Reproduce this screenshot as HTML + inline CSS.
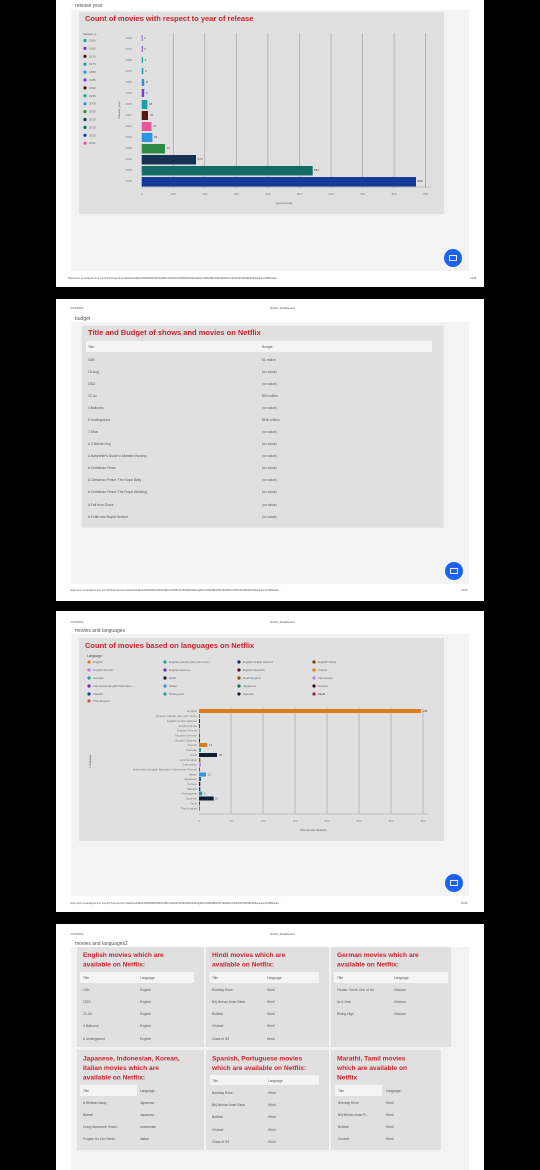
<!DOCTYPE html>
<html><head><meta charset="utf-8"><style>
html,body{margin:0;padding:0;background:#000;}
svg{display:block;font-family:"Liberation Sans",sans-serif;}
</style></head><body>
<svg width="540" height="1170" viewBox="0 0 540 1170" xmlns="http://www.w3.org/2000/svg">
<rect width="540" height="1170" fill="#000"/>

<!-- PAGE 1 -->
<rect x="56" y="0" width="428" height="287" fill="#fff"/>
<rect x="71" y="10" width="398" height="261" fill="#f3f3f3"/>
<text x="75" y="7" font-size="5" fill="#555">release year</text>
<rect x="79" y="12" width="365" height="202" fill="#e0e0e0"/>
<text x="85" y="21" font-size="7.5" font-weight="bold" fill="#d0202a">Count of movies with respect to year of release</text>
<g font-size="3" fill="#555">
<text x="83" y="35">release_y...</text>
</g>
<g id="leg1" font-size="3" fill="#666">
<circle cx="85" cy="40.5" r="1.6" fill="#1aa39a"/><text x="89" y="41.5">1960</text>
<circle cx="85" cy="48.4" r="1.6" fill="#7a3fc8"/><text x="89" y="49.4">1965</text>
<circle cx="85" cy="56.3" r="1.6" fill="#4a1010"/><text x="89" y="57.3">1970</text>
<circle cx="85" cy="64.2" r="1.6" fill="#1aa39a"/><text x="89" y="65.2">1975</text>
<circle cx="85" cy="72.1" r="1.6" fill="#2b95e0"/><text x="89" y="73.1">1980</text>
<circle cx="85" cy="80" r="1.6" fill="#7a3fc8"/><text x="89" y="81">1985</text>
<circle cx="85" cy="87.9" r="1.6" fill="#4a1010"/><text x="89" y="88.9">1990</text>
<circle cx="85" cy="95.8" r="1.6" fill="#1aa39a"/><text x="89" y="96.8">1995</text>
<circle cx="85" cy="103.7" r="1.6" fill="#2b95e0"/><text x="89" y="104.7">2000</text>
<circle cx="85" cy="111.6" r="1.6" fill="#2e8b46"/><text x="89" y="112.6">2005</text>
<circle cx="85" cy="119.5" r="1.6" fill="#163250"/><text x="89" y="120.5">2010</text>
<circle cx="85" cy="127.4" r="1.6" fill="#136b66"/><text x="89" y="128.4">2015</text>
<circle cx="85" cy="135.3" r="1.6" fill="#153a9a"/><text x="89" y="136.3">2020</text>
<circle cx="85" cy="143.2" r="1.6" fill="#e8579b"/><text x="89" y="144.2">2021</text>
</g>
<text x="120" y="110" font-size="3" fill="#555" transform="rotate(-90 120 110)" text-anchor="middle">release_year</text>
<g stroke="#9a9a9a" stroke-width="0.6">
<line x1="173.2" y1="33" x2="173.2" y2="188"/><line x1="204.8" y1="33" x2="204.8" y2="188"/>
<line x1="236.3" y1="33" x2="236.3" y2="188"/><line x1="267.9" y1="33" x2="267.9" y2="188"/>
<line x1="299.4" y1="33" x2="299.4" y2="188"/><line x1="331" y1="33" x2="331" y2="188"/>
<line x1="362.5" y1="33" x2="362.5" y2="188"/><line x1="394.1" y1="33" x2="394.1" y2="188"/>
<line x1="425.7" y1="33" x2="425.7" y2="188"/>
<line x1="141.7" y1="187" x2="431" y2="187"/>
</g>
<g font-size="3" fill="#777">
<text x="132" y="39" text-anchor="end">1962</text><rect x="141.7" y="35" width="0.8" height="6" fill="#7a3fc8"/><text x="144" y="39" fill="#444">2</text>
<text x="132" y="50" text-anchor="end">1973</text><rect x="141.7" y="46" width="1" height="6" fill="#7a3fc8"/><text x="144" y="50" fill="#444">3</text>
<text x="132" y="61" text-anchor="end">1980</text><rect x="141.7" y="57" width="1.3" height="6" fill="#1aa39a"/><text x="144.5" y="61" fill="#444">4</text>
<text x="132" y="72" text-anchor="end">1975</text><rect x="141.7" y="68" width="1.6" height="6" fill="#1aa39a"/><text x="145" y="72" fill="#444">5</text>
<text x="132" y="83" text-anchor="end">1985</text><rect x="141.7" y="79" width="2.5" height="7" fill="#2b95e0"/><text x="146" y="83" fill="#444">8</text>
<text x="132" y="94" text-anchor="end">1990</text><rect x="141.7" y="89" width="2.5" height="8" fill="#7a3fc8"/><text x="146" y="94" fill="#444">8</text>
<text x="132" y="105" text-anchor="end">1995</text><rect x="141.7" y="100" width="5.7" height="9" fill="#1aa39a"/><text x="149" y="105" fill="#444">18</text>
<text x="132" y="116" text-anchor="end">1997</text><rect x="141.7" y="111" width="6.3" height="9" fill="#5a1418"/><text x="150" y="116" fill="#444">20</text>
<text x="132" y="127" text-anchor="end">2021</text><rect x="141.7" y="122" width="9.8" height="9" fill="#e8579b"/><text x="153" y="127" fill="#444">31</text>
<text x="132" y="138" text-anchor="end">2000</text><rect x="141.7" y="133" width="10.7" height="9" fill="#2b95e0"/><text x="154" y="138" fill="#444">34</text>
<text x="132" y="149" text-anchor="end">2005</text><rect x="141.7" y="144" width="23.3" height="9.5" fill="#2e8b46"/><text x="166.5" y="149" fill="#444">73</text>
<text x="132" y="160" text-anchor="end">2010</text><rect x="141.7" y="155" width="54.3" height="9.5" fill="#163250"/><text x="197.5" y="160" fill="#444">172</text>
<text x="132" y="171" text-anchor="end">2015</text><rect x="141.7" y="166" width="171" height="9.5" fill="#136b66"/><text x="314" y="171" fill="#444">541</text>
<text x="132" y="182" text-anchor="end">2020</text><rect x="141.7" y="177" width="274.3" height="9.5" fill="#153a9a"/><text x="417.5" y="182" fill="#444">869</text>
</g>
<g font-size="3" fill="#777" text-anchor="middle">
<text x="141.7" y="195">0</text><text x="173.2" y="195">100</text><text x="204.8" y="195">200</text><text x="236.3" y="195">300</text><text x="267.9" y="195">400</text><text x="299.4" y="195">500</text><text x="331" y="195">600</text><text x="362.5" y="195">700</text><text x="394.1" y="195">800</text><text x="425.7" y="195">900</text>
<text x="284" y="204" fill="#555">type (Count)</text>
</g>
<circle cx="453" cy="258" r="9" fill="#1a62f0"/>
<rect x="449.5" y="255.5" width="7" height="5" fill="none" stroke="#fff" stroke-width="0.9"/>
<text x="68" y="279" font-size="2.6" fill="#555">https://us1.ca.analytics.ibm.com/bi/?perspective=dashboard&amp;id=i09A80BAF867E4ZDCA4D0F33C800EF904&amp;objRef=i09A80BAF867E4ZDCA4D0F33C800EF904&amp;options%5Bdisabl...</text>
<text x="470" y="279" font-size="2.6" fill="#555">13/16</text>

<!-- PAGE 2 -->
<rect x="56" y="299" width="428" height="302" fill="#fff"/>
<text x="70" y="309" font-size="3" fill="#555">7/24/2021</text>
<text x="270" y="309" font-size="3" fill="#555">Netflix_Dashboard</text>
<rect x="71" y="322" width="398" height="262" fill="#f3f3f3"/>
<text x="75" y="320" font-size="5" fill="#555">budget</text>
<rect x="81.6" y="325.7" width="362" height="202" fill="#e0e0e0"/>
<text x="88" y="335" font-size="7.5" font-weight="bold" fill="#d0202a">Title and Budget of shows and movies on Netflix</text>
<rect x="86" y="341" width="346" height="11" fill="#f4f4f4"/>
<g font-size="3.3" fill="#555">
<text x="88" y="348">Title</text><text x="262" y="348">Budget</text>
<text x="88" y="361">13th</text><text x="262" y="361">$1 million</text>
<text x="88" y="373">15-Aug</text><text x="262" y="373">(no value)</text>
<text x="88" y="385">1922</text><text x="262" y="385">(no value)</text>
<text x="88" y="397">22-Jul</text><text x="262" y="397">$20 million</text>
<text x="88" y="409">4 Balloons</text><text x="262" y="409">(no value)</text>
<text x="88" y="421">6 Underground</text><text x="262" y="421">$150 million</text>
<text x="88" y="433">7 Años</text><text x="262" y="433">(no value)</text>
<text x="88" y="445">A 3 Minute Hug</text><text x="262" y="445">(no value)</text>
<text x="88" y="457">A Babysitter's Guide to Monster Hunting</text><text x="262" y="457">(no value)</text>
<text x="88" y="469">A Christmas Prince</text><text x="262" y="469">(no value)</text>
<text x="88" y="481">A Christmas Prince: The Royal Baby</text><text x="262" y="481">(no value)</text>
<text x="88" y="493">A Christmas Prince: The Royal Wedding</text><text x="262" y="493">(no value)</text>
<text x="88" y="506">A Fall from Grace</text><text x="262" y="506">(no value)</text>
<text x="88" y="518">A Futile and Stupid Gesture</text><text x="262" y="518">(no value)</text>
</g>
<circle cx="454" cy="571" r="9" fill="#1a62f0"/>
<rect x="450.5" y="568.5" width="7" height="5" fill="none" stroke="#fff" stroke-width="0.9"/>
<text x="70" y="591" font-size="2.6" fill="#555">https://us1.ca.analytics.ibm.com/bi/?perspective=dashboard&amp;id=i09A80BAF867E4ZDCA4D0F33C800EF904&amp;objRef=i09A80BAF867E4ZDCA4D0F33C800EF904&amp;options%5Bdisabl...</text>
<text x="461" y="591" font-size="2.6" fill="#555">14/16</text>

<!-- PAGE 3 -->
<rect x="56" y="611" width="428" height="301" fill="#fff"/>
<text x="70" y="623" font-size="3" fill="#555">7/24/2021</text>
<text x="270" y="623" font-size="3" fill="#555">Netflix_Dashboard</text>
<rect x="71" y="634" width="398" height="262" fill="#f3f3f3"/>
<text x="75" y="632" font-size="5" fill="#555">movies and languages</text>
<rect x="79" y="638" width="365" height="203" fill="#e0e0e0"/>
<text x="85" y="648" font-size="7.5" font-weight="bold" fill="#d0202a">Count of movies based on languages on Netflix</text>
<text x="87" y="657" font-size="3.3" fill="#444">Language</text>
<g font-size="3" fill="#666">
<circle cx="89" cy="662" r="1.6" fill="#e07b1a"/><text x="93" y="663">English</text>
<circle cx="89" cy="670" r="1.6" fill="#b87ef0"/><text x="93" y="671">English French</text>
<circle cx="89" cy="678" r="1.6" fill="#1aa39a"/><text x="93" y="679">German</text>
<circle cx="89" cy="686" r="1.6" fill="#6a2fb8"/><text x="93" y="687">Indonesian English Mandarin ...</text>
<circle cx="89" cy="694" r="1.6" fill="#153a9a"/><text x="93" y="695">Marathi</text>
<circle cx="89" cy="701" r="1.6" fill="#e84848"/><text x="93" y="702">Thai English</text>
<circle cx="165" cy="662" r="1.6" fill="#1aa39a"/><text x="169" y="663">English (naval) (qbu (10 mins.)</text>
<circle cx="165" cy="670" r="1.6" fill="#6a2fb8"/><text x="169" y="671">English German</text>
<circle cx="165" cy="678" r="1.6" fill="#0e1e36"/><text x="169" y="679">Hindi</text>
<circle cx="165" cy="686" r="1.6" fill="#2b95e0"/><text x="169" y="687">Italian</text>
<circle cx="165" cy="694" r="1.6" fill="#1aa39a"/><text x="169" y="695">Portuguese</text>
<circle cx="239" cy="662" r="1.6" fill="#163250"/><text x="243" y="663">English Arabic Hebrew</text>
<circle cx="239" cy="670" r="1.6" fill="#4a1010"/><text x="243" y="671">English Spanish</text>
<circle cx="239" cy="678" r="1.6" fill="#8a4a10"/><text x="243" y="679">Hindi English</text>
<circle cx="239" cy="686" r="1.6" fill="#136b66"/><text x="243" y="687">Japanese</text>
<circle cx="239" cy="694" r="1.6" fill="#0e1e36"/><text x="243" y="695">Spanish</text>
<circle cx="314" cy="662" r="1.6" fill="#7a3a10"/><text x="318" y="663">English Dinka</text>
<circle cx="314" cy="670" r="1.6" fill="#e07b1a"/><text x="318" y="671">French</text>
<circle cx="314" cy="678" r="1.6" fill="#b87ef0"/><text x="318" y="679">Indonesian</text>
<circle cx="314" cy="686" r="1.6" fill="#3a0a10"/><text x="318" y="687">Korean</text>
<circle cx="314" cy="694" r="1.6" fill="#a01850"/><text x="318" y="695" fill="#222">Tamil</text>
</g>
<text x="91" y="761" font-size="3" fill="#555" transform="rotate(-90 91 761)" text-anchor="middle">Language</text>
<g stroke="#9a9a9a" stroke-width="0.6">
<line x1="231" y1="708" x2="231" y2="814"/><line x1="263" y1="708" x2="263" y2="814"/>
<line x1="295" y1="708" x2="295" y2="814"/><line x1="327" y1="708" x2="327" y2="814"/>
<line x1="359" y1="708" x2="359" y2="814"/><line x1="391" y1="708" x2="391" y2="814"/>
<line x1="423" y1="708" x2="423" y2="814"/>
<line x1="199" y1="814" x2="428" y2="814"/>
</g>
<g font-size="3" fill="#777" text-anchor="end">
<text x="197" y="712">English</text><text x="197" y="717">English (naval) (qbu (10 mins.)</text><text x="197" y="722">English Arabic Hebrew</text><text x="197" y="727">English Dinka</text><text x="197" y="731.5">English French</text><text x="197" y="736.5">English German</text><text x="197" y="741.5">English Spanish</text><text x="197" y="746">French</text><text x="197" y="751">German</text><text x="197" y="756">Hindi</text><text x="197" y="761">Hindi English</text><text x="197" y="765.5">Indonesian</text><text x="197" y="770.5">Indonesian English Mandarin Cantonese French</text><text x="197" y="775.5">Italian</text><text x="197" y="780">Japanese</text><text x="197" y="785">Korean</text><text x="197" y="790">Marathi</text><text x="197" y="794.5">Portuguese</text><text x="197" y="799.5">Spanish</text><text x="197" y="804.5">Tamil</text><text x="197" y="809.5">Thai English</text>
</g>
<g>
<rect x="199" y="709" width="222" height="4" fill="#e07b1a"/>
<rect x="199" y="714" width="1" height="4" fill="#1aa39a"/>
<rect x="199" y="719" width="1" height="4" fill="#163250"/>
<rect x="199" y="724" width="1" height="4" fill="#7a3a10"/>
<rect x="199" y="728.5" width="1" height="4" fill="#b87ef0"/>
<rect x="199" y="733.5" width="1" height="4" fill="#6a2fb8"/>
<rect x="199" y="738.5" width="1" height="4" fill="#4a1010"/>
<rect x="199" y="743" width="8.3" height="4" fill="#e07b1a"/>
<rect x="199" y="748" width="2" height="4" fill="#1aa39a"/>
<rect x="199" y="753" width="18" height="4" fill="#0e1e36"/>
<rect x="199" y="758" width="1.3" height="4" fill="#8a4a10"/>
<rect x="199" y="762.5" width="2" height="4" fill="#b87ef0"/>
<rect x="199" y="767.5" width="1" height="4" fill="#6a2fb8"/>
<rect x="199" y="772.5" width="7" height="4" fill="#2b95e0"/>
<rect x="199" y="777" width="2" height="4" fill="#136b66"/>
<rect x="199" y="782" width="1.3" height="4" fill="#3a0a10"/>
<rect x="199" y="787" width="1.3" height="4" fill="#153a9a"/>
<rect x="199" y="791.5" width="3.2" height="4" fill="#1aa39a"/>
<rect x="199" y="796.5" width="14.7" height="4" fill="#0e1e36"/>
<rect x="199" y="801.5" width="1" height="4" fill="#a01850"/>
<rect x="199" y="806.5" width="1" height="4" fill="#e84848"/>
</g>
<g font-size="2.6" fill="#444">
<text x="423" y="712">346</text><text x="209" y="746">13</text><text x="219" y="756">28</text><text x="208" y="775.5">11</text><text x="215" y="799.5">23</text><text x="204" y="794.5">5</text>
</g>
<g font-size="3" fill="#777" text-anchor="middle">
<text x="199" y="822">0</text><text x="231" y="822">50</text><text x="263" y="822">100</text><text x="295" y="822">150</text><text x="327" y="822">200</text><text x="359" y="822">250</text><text x="391" y="822">300</text><text x="423" y="822">350</text>
<text x="313" y="831" fill="#555">Title (Count distinct)</text>
</g>
<circle cx="454" cy="883" r="9" fill="#1a62f0"/>
<rect x="450.5" y="880.5" width="7" height="5" fill="none" stroke="#fff" stroke-width="0.9"/>
<text x="70" y="904" font-size="2.6" fill="#555">https://us1.ca.analytics.ibm.com/bi/?perspective=dashboard&amp;id=i09A80BAF867E4ZDCA4D0F33C800EF904&amp;objRef=i09A80BAF867E4ZDCA4D0F33C800EF904&amp;options%5Bdisabl...</text>
<text x="461" y="904" font-size="2.6" fill="#555">15/16</text>

<!-- PAGE 4 -->
<rect x="56" y="924" width="428" height="246" fill="#fff"/>
<text x="70" y="935" font-size="3" fill="#555">7/24/2021</text>
<text x="270" y="935" font-size="3" fill="#555">Netflix_Dashboard</text>
<rect x="71" y="947" width="398" height="223" fill="#f3f3f3"/>
<text x="75" y="945" font-size="5" fill="#555">movies and languages2</text>
<rect x="77" y="947" width="127" height="100" fill="#e0e0e0"/>
<rect x="206" y="947" width="123" height="100" fill="#e0e0e0"/>
<rect x="331" y="947" width="120" height="100" fill="#e0e0e0"/>
<rect x="77" y="1050" width="127" height="100" fill="#e0e0e0"/>
<rect x="206" y="1050" width="123" height="100" fill="#e0e0e0"/>
<rect x="331" y="1050" width="110" height="100" fill="#e0e0e0"/>
<g font-size="6.6" font-weight="bold" fill="#d0202a">
<text x="83" y="957">English movies which are</text><text x="83" y="966.5">available on Netflix:</text>
<text x="212" y="957">Hindi movies which are</text><text x="212" y="966.5">available on Netflix:</text>
<text x="337" y="957">German movies which are</text><text x="337" y="966.5">available on Netflix:</text>
<text x="83" y="1060.5">Japanese, Indonesian, Korean,</text><text x="83" y="1070">Italian movies which are</text><text x="83" y="1079.5">available on Netflix:</text>
<text x="212" y="1060.5">Spanish, Portuguese movies</text><text x="212" y="1070">which are available on Netflix:</text>
<text x="337" y="1060.5">Marathi, Tamil movies</text><text x="337" y="1070">which are available on</text><text x="337" y="1079.5">Netflix</text>
</g>
<rect x="80" y="972" width="114" height="11" fill="#f4f4f4"/>
<rect x="209.6" y="972" width="109.4" height="11" fill="#f4f4f4"/>
<rect x="334" y="972" width="114" height="11" fill="#f4f4f4"/>
<rect x="210" y="1075" width="109" height="10" fill="#f4f4f4"/>
<rect x="80" y="1085" width="57" height="11" fill="#f4f4f4"/>
<rect x="335" y="1085" width="47" height="11" fill="#f4f4f4"/>
<g font-size="3.3" fill="#555">
<text x="83" y="979">Title</text><text x="140" y="979">Language</text>
<text x="83" y="991">13th</text><text x="140" y="991">English</text>
<text x="83" y="1003">1922</text><text x="140" y="1003">English</text>
<text x="83" y="1015">22-Jul</text><text x="140" y="1015">English</text>
<text x="83" y="1027">4 Balloons</text><text x="140" y="1027">English</text>
<text x="83" y="1040">6 Underground</text><text x="140" y="1040">English</text>
<text x="212" y="979">Title</text><text x="267" y="979">Language</text>
<text x="212" y="991">Bombay Rose</text><text x="267" y="991">Hindi</text>
<text x="212" y="1003">Brij Mohan Amar Rahe</text><text x="267" y="1003">Hindi</text>
<text x="212" y="1015">Bulbbul</text><text x="267" y="1015">Hindi</text>
<text x="212" y="1027">Choked</text><text x="267" y="1027">Hindi</text>
<text x="212" y="1040">Class of '83</text><text x="267" y="1040">Hindi</text>
<text x="337" y="979">Title</text><text x="394" y="979">Language</text>
<text x="337" y="991">Freaks: You're One of Us</text><text x="394" y="991">German</text>
<text x="337" y="1003">Isi &amp; Ossi</text><text x="394" y="1003">German</text>
<text x="337" y="1015">Rising High</text><text x="394" y="1015">German</text>
<text x="83" y="1092">Title</text><text x="140" y="1092">Language</text>
<text x="83" y="1104">A Whisker Away</text><text x="140" y="1104">Japanese</text>
<text x="83" y="1116">Blame!</text><text x="140" y="1116">Japanese</text>
<text x="83" y="1128">Crazy Awesome Teach...</text><text x="140" y="1128">Indonesian</text>
<text x="83" y="1140">Forgive Us Our Debts</text><text x="140" y="1140">Italian</text>
<text x="212" y="1082">Title</text><text x="268" y="1082">Language</text>
<text x="212" y="1094">Bombay Rose</text><text x="268" y="1094">Hindi</text>
<text x="212" y="1106">Brij Mohan Amar Rahe</text><text x="268" y="1106">Hindi</text>
<text x="212" y="1118">Bulbbul</text><text x="268" y="1118">Hindi</text>
<text x="212" y="1131">Choked</text><text x="268" y="1131">Hindi</text>
<text x="212" y="1143">Class of '83</text><text x="268" y="1143">Hindi</text>
<text x="338" y="1092">Title</text><text x="386" y="1092">Language</text>
<text x="338" y="1104">Bombay Rose</text><text x="386" y="1104">Hindi</text>
<text x="338" y="1116">Brij Mohan Amar R...</text><text x="386" y="1116">Hindi</text>
<text x="338" y="1128">Bulbbul</text><text x="386" y="1128">Hindi</text>
<text x="338" y="1140">Choked</text><text x="386" y="1140">Hindi</text>
</g>
</svg>
</body></html>
